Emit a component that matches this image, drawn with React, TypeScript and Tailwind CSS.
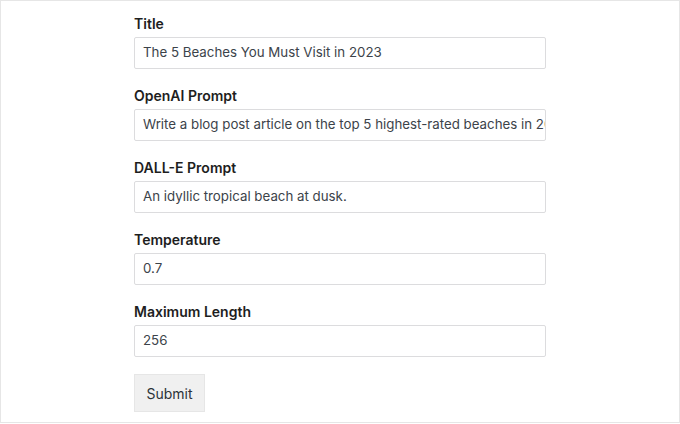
import React from "react";

const fields = [
  { label: "Title", value: "The 5 Beaches You Must Visit in 2023" },
  { label: "OpenAI Prompt", value: "Write a blog post article on the top 5 highest-rated beaches in 2023" },
  { label: "DALL-E Prompt", value: "An idyllic tropical beach at dusk." },
  { label: "Temperature", value: "0.7" },
  { label: "Maximum Length", value: "256" },
];

export default function App() {
  return (
    <div
      className="w-[680px] h-[423px] border border-[#e6e6e6] bg-white pl-[133px] pt-3"
      style={{ fontFamily: "Inter, 'Liberation Sans', Arial, sans-serif" }}
    >
      <div className="w-[412px] flex flex-col gap-4">
        {fields.map((f) => (
          <div key={f.label} className="flex flex-col gap-1">
            <label className="pt-[2px] text-[14px] leading-[18px] font-semibold text-[#1e1e1e]">{f.label}</label>
            <div className="h-8 w-full border border-[#dcdcde] rounded-[2px] pl-2 pr-[3px] flex items-center overflow-hidden bg-white">
              <span className="text-[13.3px] text-[#3c434a] whitespace-nowrap">{f.value}</span>
            </div>
          </div>
        ))}
      </div>
      <button className="mt-[17px] h-[38px] w-[71px] bg-[#f0f0f0] border border-[#e6e6e6] text-[14px] text-[#2c3338]">
        Submit
      </button>
    </div>
  );
}
